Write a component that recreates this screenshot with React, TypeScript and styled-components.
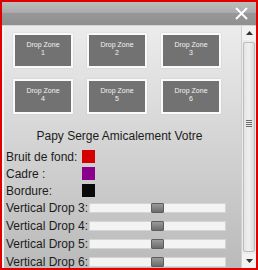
import React from 'react';
import styled, { createGlobalStyle } from 'styled-components';

const GlobalStyle = createGlobalStyle`
  html, body {
    margin: 0;
    padding: 0;
    background: #fff;
  }
  body {
    font-family: 'Liberation Sans', Arial, sans-serif;
  }
`;

const Window = styled.div`
  width: 258px;
  height: 270px;
  box-sizing: border-box;
  border: 2px solid #e10000;
  display: flex;
  flex-direction: column;
  overflow: hidden;
`;

const TitleBar = styled.div`
  height: 24px;
  flex: 0 0 24px;
  display: flex;
  align-items: center;
  justify-content: flex-end;
  padding-right: 8px;
  background: linear-gradient(#bcbcbc, #acacac 45%, #979797 50%, #8f8f8f);
  border-bottom: 1px solid #d6d6d6;
  box-sizing: border-box;
`;

const CloseIcon = styled.svg`
  width: 13px;
  height: 13px;
`;

const Body = styled.div`
  flex: 1;
  display: flex;
  min-height: 0;
  background: linear-gradient(#ececec, #bababa);
  border-left: 2px solid #f4f4f4;
`;

const Content = styled.div`
  flex: 1;
  overflow: hidden;
  padding: 7px 0 0 2px;
`;

const ZoneGrid = styled.div`
  display: grid;
  grid-template-columns: repeat(3, 60px);
  column-gap: 14px;
  row-gap: 11px;
  padding-left: 7px;
`;

const Zone = styled.div`
  height: 35px;
  box-sizing: border-box;
  background: #727272;
  border: 2px solid #fafafa;
  color: #f2f2f2;
  font-size: 7px;
  line-height: 8px;
  text-align: center;
  padding-top: 6px;
  box-shadow: 0 0 1px rgba(0, 0, 0, 0.2);
`;

const Heading = styled.div`
  margin-top: 15px;
  font-size: 12px;
  line-height: 14px;
  text-align: center;
  color: #1c1c1c;
  padding-right: 8px;
`;

const Controls = styled.div`
  margin-top: 5px;
`;

const Row = styled.div<{ h: number }>`
  display: flex;
  align-items: center;
  height: ${(p) => p.h}px;
  font-size: 12px;
  color: #1c1c1c;
`;

const Label = styled.span<{ w: number }>`
  width: ${(p) => p.w}px;
  flex: 0 0 ${(p) => p.w}px;
  white-space: nowrap;
`;

const Swatch = styled.span<{ color: string }>`
  width: 13px;
  height: 13px;
  background: ${(p) => p.color};
`;

const Track = styled.div`
  width: 137px;
  height: 10px;
  box-sizing: border-box;
  background: #f3f3f3;
  border: 1px solid #d4d4d4;
  display: flex;
  justify-content: center;
  align-items: center;
`;

const Thumb = styled.div`
  width: 13px;
  height: 10px;
  box-sizing: border-box;
  border: 1px solid #5e5e5e;
  background: linear-gradient(#9a9a9a, #6c6c6c);
  border-radius: 1px;
`;

const ScrollBar = styled.div`
  width: 14px;
  flex: 0 0 14px;
  display: flex;
  flex-direction: column;
  background: #ececec;
  border-left: 1px solid #cfcfcf;
`;

const Arrow = styled.div`
  height: 14px;
  flex: 0 0 14px;
  display: flex;
  align-items: center;
  justify-content: center;
  background: #f2f2f2;
`;

const ScrollThumb = styled.div`
  flex: 1;
  margin: 2px 1px;
  background: linear-gradient(90deg, #e4e4e4, #f0f0f0 50%, #dcdcdc);
  border: 1px solid #bcbcbc;
  border-radius: 2px;
  display: flex;
  align-items: center;
  justify-content: center;
`;

const Grip = styled.div`
  width: 6px;
  height: 7px;
  background: repeating-linear-gradient(#6a6a6a 0 1px, transparent 1px 2px);
  margin-bottom: 48px;
`;

const Tri = ({ down }: { down?: boolean }) => (
  <svg width="7" height="4" viewBox="0 0 7 4">
    <path d={down ? 'M0 0H7L3.5 4Z' : 'M0 4H7L3.5 0Z'} fill="#333" />
  </svg>
);

const colorRows = [
  { label: 'Bruit de fond:', color: '#d40000' },
  { label: 'Cadre :', color: '#8a008a' },
  { label: 'Bordure:', color: '#0a0a0a' },
];

export default function App() {
  return (
    <>
      <GlobalStyle />
      <Window>
        <TitleBar>
          <CloseIcon viewBox="0 0 13 13">
            <path d="M1 1L12 12M12 1L1 12" stroke="#fff" strokeWidth="2" />
          </CloseIcon>
        </TitleBar>
        <Body>
          <Content>
            <ZoneGrid>
              {[1, 2, 3, 4, 5, 6].map((n) => (
                <Zone key={n}>
                  Drop Zone
                  <br />
                  {n}
                </Zone>
              ))}
            </ZoneGrid>
            <Heading>Papy Serge Amicalement Votre</Heading>
            <Controls>
              {colorRows.map((r) => (
                <Row h={17} key={r.label}>
                  <Label w={76}>{r.label}</Label>
                  <Swatch color={r.color} />
                </Row>
              ))}
              {[3, 4, 5, 6].map((n) => (
                <Row h={18} key={n}>
                  <Label w={83}>Vertical Drop {n}:</Label>
                  <Track>
                    <Thumb />
                  </Track>
                </Row>
              ))}
            </Controls>
          </Content>
          <ScrollBar>
            <Arrow>
              <Tri />
            </Arrow>
            <ScrollThumb>
              <Grip />
            </ScrollThumb>
            <Arrow>
              <Tri down />
            </Arrow>
          </ScrollBar>
        </Body>
      </Window>
    </>
  );
}
